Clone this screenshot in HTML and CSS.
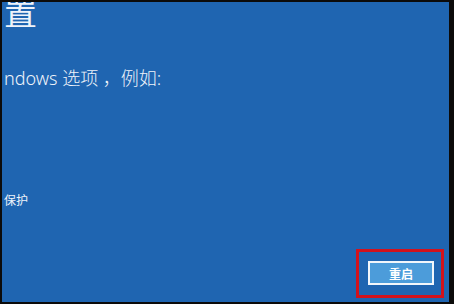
FILE: index.html
```html
<!DOCTYPE html>
<html lang="zh-CN">

<head>
  <meta charset="UTF-8">
  <title>启动设置</title>
  <link rel="stylesheet" href="styles.css">
</head>

<body>
  <div class="screen">
    <div class="content">
      <h1 class="title">置</h1>
      <p class="lead">ndows 选项 ，例如:</p>
      <p class="item">保护</p>
    </div>
    <div class="footer">
      <div class="highlight">
        <button type="button" class="btn-restart">重启</button>
      </div>
    </div>
  </div>
</body>

</html>
```

FILE: styles.css
```css
html,
body {
  margin: 0;
  padding: 0;
}

body {
  background-color: #0c0b0a;
  font-family: "Noto Sans", "Noto Sans CJK SC", sans-serif;
  color: #eef3fa;
  width: 454px;
  height: 304px;
  overflow: hidden;
}

.screen {
  margin: 2px 5px 2px 2px;
  height: 300px;
  background-color: #1f65b1;
  display: flex;
  flex-direction: column;
  overflow: hidden;
}

.content {
  flex: 1;
  padding-left: 2px;
}

.title {
  margin: -6px 0 0 0;
  font-size: 33px;
  font-weight: normal;
  line-height: 33px;
}

.lead {
  margin: 39px 0 0 0;
  font-size: 18px;
  line-height: 20px;
  font-weight: 300;
}

.item {
  margin: 106px 0 0 0;
  font-size: 12px;
  line-height: 14px;
}

.footer {
  display: flex;
  justify-content: flex-end;
  padding: 0 5px 4px 0;
}

.highlight {
  border: 3px solid #d3121c;
  padding: 9px 7px 10px 9px;
}

.btn-restart {
  display: block;
  width: 66px;
  height: 24px;
  padding: 0;
  border: 2px solid #f2f6fb;
  background-color: #4c9cda;
  color: #ffffff;
  font-family: "Noto Sans CJK SC", sans-serif;
  font-size: 12px;
  font-weight: bold;
  cursor: pointer;
}
```
